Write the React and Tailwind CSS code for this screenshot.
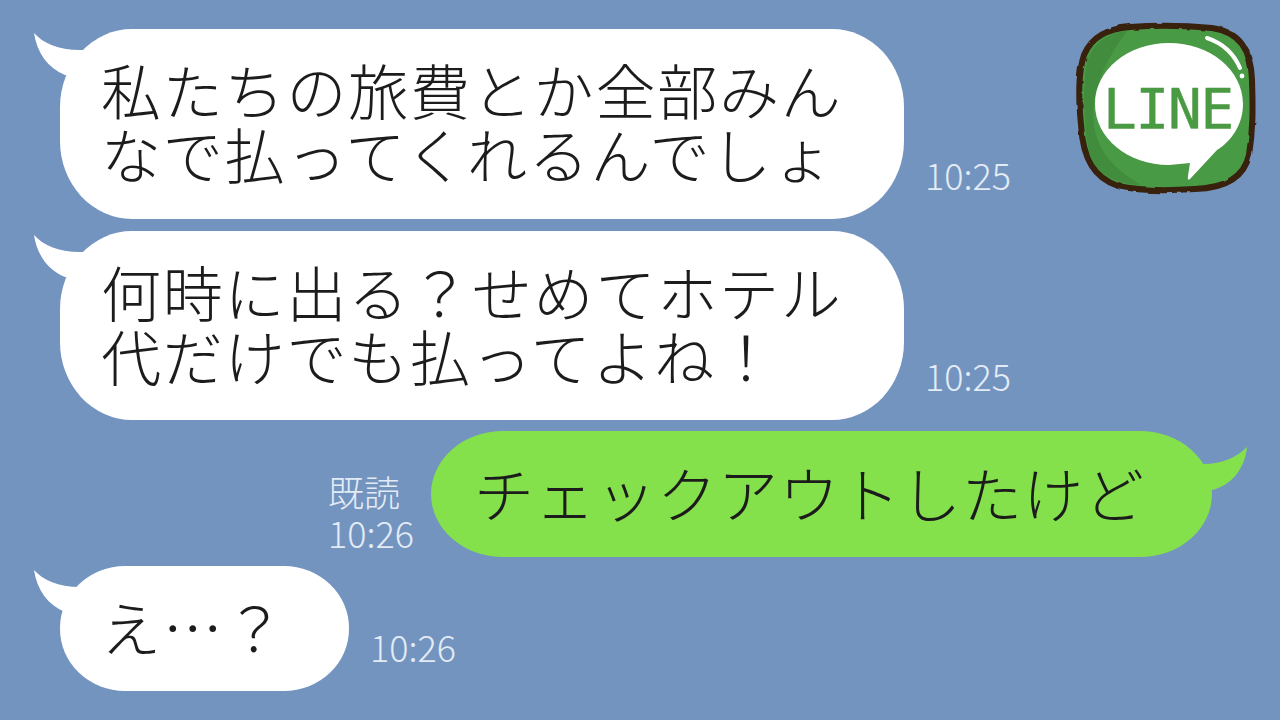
const FONT = "font-['Noto_Sans_CJK_JP','Noto_Sans',sans-serif]"

const LeftTail = () => (
    <svg className="absolute -left-[26px] top-[4px]" width="60" height="46" viewBox="0 0 60 46">
        <path d="M0 0 C9 10 24 17 46 17 L60 17 L60 46 L31 42 C14 35 3 20 0 0 Z" fill="#ffffff" />
    </svg>
)

const RightTail = () => (
    <svg className="absolute -right-[35px] top-[16px]" width="62" height="48" viewBox="0 0 62 48">
        <path d="M62 0 C52 10 38 17 18 17 L0 17 L0 44 L27 43 C48 38 60 20 62 0 Z" fill="#84e14c" />
    </svg>
)

const Time = ({ children, className = '' }) => (
    <span className={`text-[36px] leading-[41px] font-light text-[#e3ebf5] whitespace-nowrap ${className}`}>
        {children}
    </span>
)

const Received = ({ lines, time, className, timeClass }) => (
    <div className="flex items-end gap-[21px] ml-[60px]">
        <div className={`relative flex flex-col justify-center bg-white text-[#1c1c1c] pb-[6px] ${className}`}>
            <LeftTail />
            {lines.map((line) => (
                <div key={line} className="relative text-[60px] leading-[64px] font-light tracking-[1.8px] whitespace-nowrap">
                    {line}
                </div>
            ))}
        </div>
        <Time className={timeClass}>{time}</Time>
    </div>
)

const LineLogo = () => (
    <svg className="absolute left-[1072px] top-[20px]" width="190" height="178" viewBox="1072 20 190 178">
        <defs>
            <filter id="rough" x="-5%" y="-5%" width="110%" height="110%">
                <feTurbulence type="fractalNoise" baseFrequency="0.07" numOctaves="2" seed="4" />
                <feDisplacementMap in="SourceGraphic" scale="3" />
            </filter>
        </defs>
        <path
            d="M1130 27 C1160 25 1190 26 1212 28 C1240 32 1251 50 1252 80 C1253 110 1253 130 1249 155 C1244 178 1225 188 1195 189 C1165 191 1140 191 1118 186 C1095 178 1083 160 1081 125 C1078 95 1079 70 1084 55 C1092 36 1108 29 1130 27 Z"
            fill="#4a9a44"
            stroke="#38200f"
            strokeWidth="6"
            filter="url(#rough)"
        />
        <path
            d="M1127 31 C1098 70 1088 105 1096 135 C1103 158 1120 172 1141 185 C1120 185 1098 176 1090 156 C1084 130 1082 90 1087 62 C1094 42 1108 33 1127 31 Z"
            fill="#418c3d"
        />
        <path d="M1169 43 C1210 43 1243 70 1243 104 C1243 126 1230 142 1217 150 L1190 179 C1187 181 1188 178 1188 176 L1190 163 L1169 165 C1128 165 1095 138 1095 104 C1095 70 1128 43 1169 43 Z" fill="#ffffff" />
        <path d="M1207 38 C1222 43 1234 54 1240 68" fill="none" stroke="#ffffff" strokeWidth="4" strokeLinecap="round" />
        <circle cx="1242" cy="76" r="2.4" fill="#ffffff" />
        <text x="1103" y="128" fontFamily="'DejaVu Sans Mono', monospace" fontSize="56" letterSpacing="-1.2" fill="#4a9a44" stroke="#4a9a44" strokeWidth="0.5" strokeLinejoin="round">
            LINE
        </text>
    </svg>
)

export default function App() {
    return (
        <div className={`relative w-[1280px] h-[720px] overflow-hidden bg-[#7494c0] pt-[29px] ${FONT}`}>
            <LineLogo />

            <Received
                lines={['私たちの旅費とか全部みん', 'なで払ってくれるんでしょ']}
                time="10:25"
                className="w-[844px] h-[190px] rounded-[72px/78px] pl-[41px]"
                timeClass="mb-[24px]"
            />

            <div className="mt-[12px]">
                <Received
                    lines={['何時に出る？せめてホテル', '代だけでも払ってよね！']}
                    time="10:25"
                    className="w-[844px] h-[189px] rounded-[72px/78px] pl-[41px]"
                    timeClass="mb-[24px]"
                />
            </div>

            <div className="mt-[11px] mr-[68px] flex justify-end items-end gap-[17px]">
                <div className="flex flex-col mb-[4px]">
                    <Time>既読</Time>
                    <Time>10:26</Time>
                </div>
                <div className="relative w-[781px] h-[126px] rounded-[72px/63px] bg-[#84e14c] pl-[43px] pb-[4px] flex items-center text-[#1c1c1c]">
                    <RightTail />
                    <span className="relative text-[60px] leading-[64px] font-light tracking-[1px] whitespace-nowrap">
                        チェックアウトしたけど
                    </span>
                </div>
            </div>

            <div className="mt-[9px]">
                <Received
                    lines={['え…？']}
                    time="10:26"
                    className="w-[289px] h-[125px] rounded-[65px/62px] pl-[41px]"
                    timeClass="mb-[24px]"
                />
            </div>
        </div>
    )
}
